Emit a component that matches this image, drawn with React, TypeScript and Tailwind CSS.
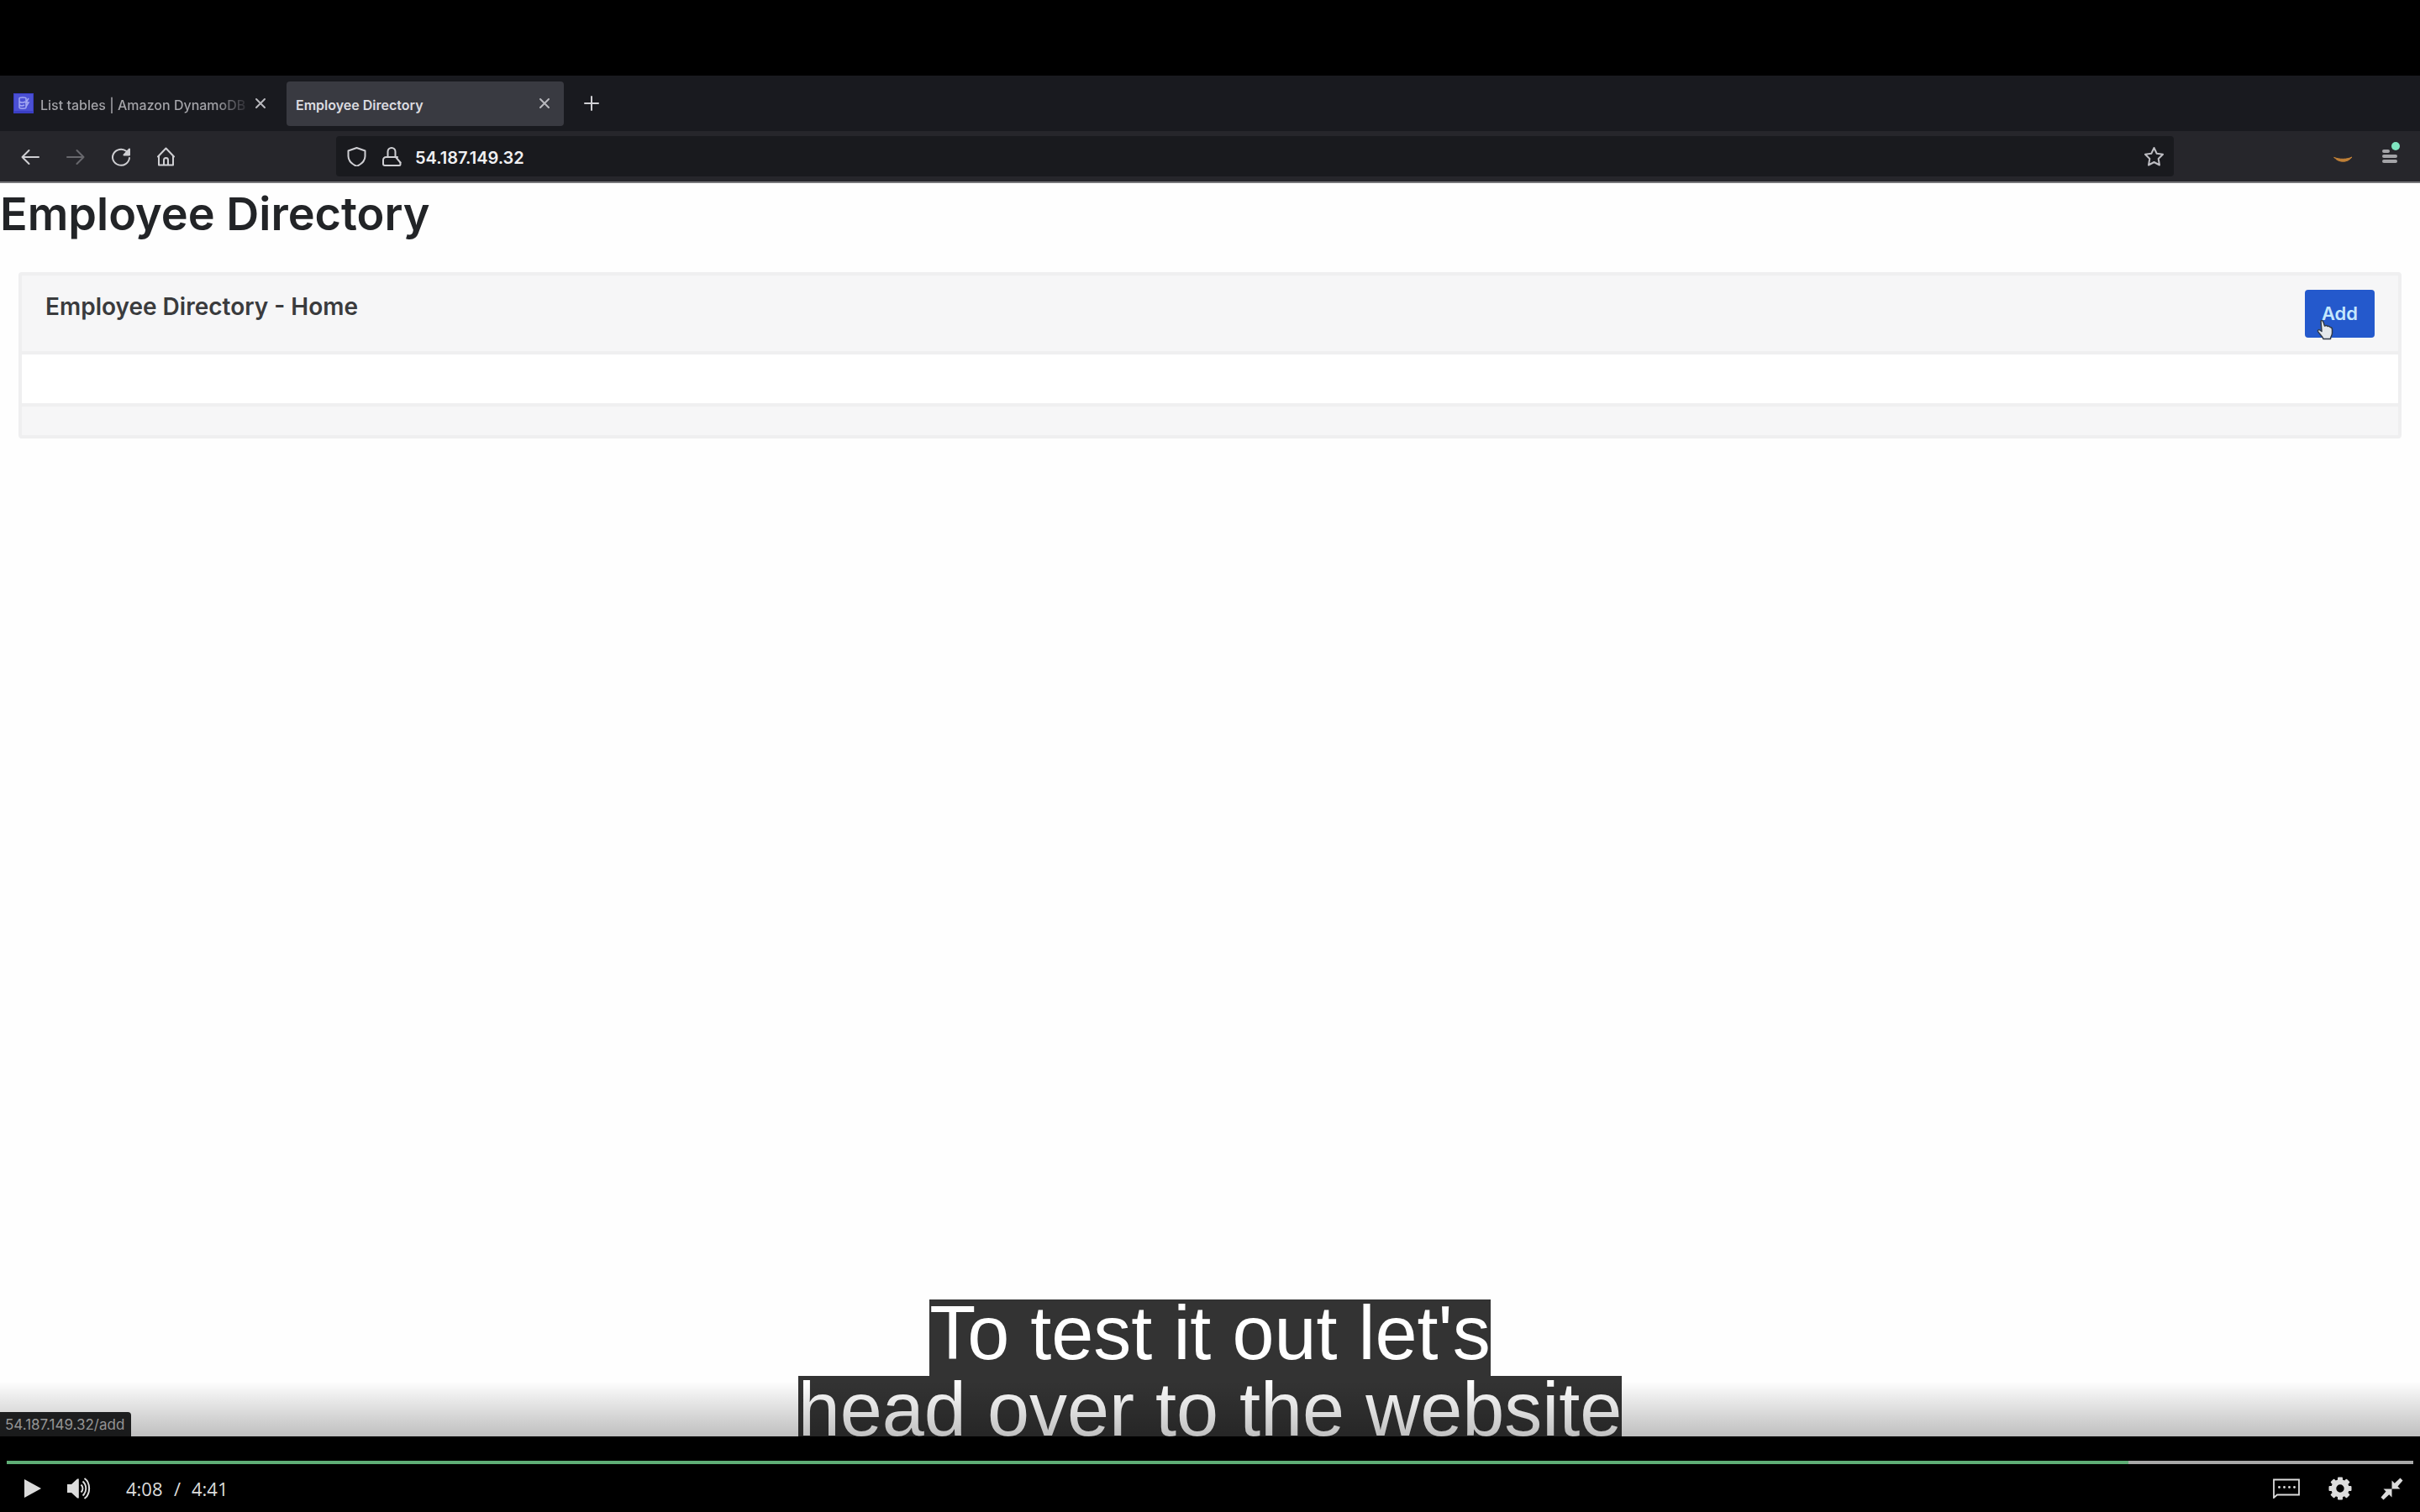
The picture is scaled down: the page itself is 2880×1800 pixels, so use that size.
import React from "react";

const INTER = "font-['Inter',sans-serif]";

type IconProps = { children: React.ReactNode; className?: string; width?: number };

function LineIcon({ children, className = "", width = 2 }: IconProps) {
  return (
    <svg
      viewBox="0 0 24 24"
      className={`block size-6 shrink-0 ${className}`}
      fill="none"
      stroke="currentColor"
      strokeWidth={width}
      strokeLinecap="round"
      strokeLinejoin="round"
      aria-hidden="true"
    >
      {children}
    </svg>
  );
}

function CloseIcon() {
  return (
    <LineIcon>
      <path d="M7 7l10 10M17 7L7 17" />
    </LineIcon>
  );
}

function TabStrip() {
  return (
    <div role="tablist" className="flex h-[66px] items-center bg-[#191a1f] text-[#b9b9be]">
      <div className="flex h-[53px] w-[341px] items-center pl-4 pr-[19px]">
        <svg viewBox="0 0 24 24" className="mr-2 size-6 shrink-0" aria-hidden="true">
          <rect width="24" height="24" fill="#3a3ec4" />
          <rect x="1" y="1" width="22" height="20" fill="#4b50d4" />
          <path
            d="M7 6c0-1.500 8-1.500 8 0v11c0 1.500-8 1.500-8 0zM7 10c2 1.200 5 1.200 7 0M7 14c2 1.200 4 1.200 6 0M18 6l-3 5h3l-3 5"
            fill="none"
            stroke="#a3a8f2"
            strokeWidth="1.500"
          />
        </svg>
        <button
          role="tab"
          aria-selected="false"
          className="min-w-0 flex-1 whitespace-nowrap bg-linear-to-r from-[#a6a6ab] from-85% to-[#2a2a30] bg-clip-text pt-[3px] text-left text-[16px] font-medium text-transparent"
        >
          List tables | Amazon DynamoDB
        </button>
        <button aria-label="Close tab" className="ml-1">
          <CloseIcon />
        </button>
      </div>
      <div className="flex h-[53px] w-[330px] items-center justify-between rounded-sm bg-[#393a41] pl-[11px] pr-[11px]">
        <button role="tab" aria-selected="true" className="pt-[3px] text-[16px] font-semibold text-[#dcdce0]">
          Employee Directory
        </button>
        <button aria-label="Close tab">
          <CloseIcon />
        </button>
      </div>
      <button aria-label="New tab" className="ml-[21px] text-[#d0d0d4]">
        <LineIcon>
          <path d="M12 4v16M4 12h16" />
        </LineIcon>
      </button>
    </div>
  );
}

function Toolbar() {
  return (
    <div className="flex h-[62px] items-center border-b-2 border-[#77777a] bg-[#26262b] text-[#cfcfd3]">
      <div className="flex w-[400px] items-center gap-[30px] pl-6">
        <button aria-label="Back">
          <LineIcon>
            <path d="M22 13H2.500M10.500 5L2.500 13l8 8" />
          </LineIcon>
        </button>
        <button aria-label="Forward" className="text-[#68686d]">
          <LineIcon>
            <path d="M2 13h19.500M13.500 5l8 8-8 8" />
          </LineIcon>
        </button>
        <button aria-label="Reload">
          <LineIcon>
            <path d="M22 14A10 9.500 0 1 1 18.500 6" />
            <path d="M22 3.500v7h-6.500z" fill="currentColor" />
          </LineIcon>
        </button>
        <button aria-label="Home">
          <LineIcon>
            <path d="M2 12.500L11.500 2.500 21 12.500M3 11.500V22.500h17V11.500" />
            <path d="M9 22V16.500a2.500 2.500 0 0 1 5 0V22" />
          </LineIcon>
        </button>
      </div>
      <div className="flex h-12 min-w-0 flex-1 items-center rounded bg-[#191a1e] pl-3 pr-3">
        <LineIcon>
          <path d="M12.500 2L22.500 5.500V12c0 5.500-3.500 9-10 12C6 21 2.500 17.500 2.500 12V5.500z" />
        </LineIcon>
        <LineIcon className="ml-[18px]">
          <path d="M4 23h17a1.500 1.500 0 0 0 1.500-1.500v-2M19 13H5.500A3.500 3.500 0 0 0 2 16.500V21c0 1 1 2 2 2" />
          <path d="M7.500 13V6.500a4.500 4.500 0 0 1 9 0V13M17 13l5.500 6.500" />
        </LineIcon>
        <input
          aria-label="Address"
          defaultValue="54.187.149.32"
          className="ml-4 min-w-0 flex-1 bg-transparent pt-[3px] text-[20px] font-semibold text-[#f0f0f2] outline-none"
        />
        <button aria-label="Bookmark this page" className="text-[#bdbdc2]">
          <LineIcon>
            <path d="M12.500 2l3.200 6.800 7.300 1-5.300 5.200 1.300 7.500-6.500-3.500L6 22.500 7.300 15 2 9.800l7.300-1z" />
          </LineIcon>
        </button>
      </div>
      <div className="flex w-[293px] items-center justify-end gap-8 pr-6">
        <button aria-label="Extension" className="text-[#c08037]">
          <LineIcon>
            <path d="M2 13.500c6 2.500 15 2.500 21-.5-5 7-16 7-21 .5z" fill="currentColor" strokeWidth="1" />
          </LineIcon>
        </button>
        <button aria-label="Open menu" className="relative text-[#a4a4a8]">
          <LineIcon width={4}>
            <path d="M5 6h5M5 12h14M5 18h14" />
          </LineIcon>
          <span className="absolute right-0 top-[-5px] size-[10px] rounded-full bg-[#7fe5c0]" />
        </button>
      </div>
    </div>
  );
}

function HandCursor() {
  return (
    <svg viewBox="0 0 20 26" className="absolute bottom-[-3px] left-[14px] h-[26px] w-5" aria-hidden="true">
      <path
        d="M5 3c1.500-1 2.500 0 3 1.500l1.500 4.500c2-1 3-.5 3.500.500 1.500-.5 2.500 0 3 1 2 0 2.500 1.500 2.500 3v4c0 3-2 4-2 7H8c-1-3-5-6-6.500-9-.5-1.500 1-2.500 2.500-1.500l2 1.500z"
        fill="#e4e8ec"
        stroke="#303a48"
        strokeWidth="1.500"
        strokeLinejoin="round"
      />
    </svg>
  );
}

function DirectoryPage() {
  return (
    <main className="flex-1 bg-[#fefefe]">
      <h1 className="text-[54px] font-semibold leading-[74px] text-[#222427]">Employee Directory</h1>
      <section className="mx-[22px] mt-8 overflow-hidden rounded border-4 border-[#efeff0] bg-white">
        <header className="flex items-start justify-between border-b-4 border-[#efeff0] bg-[#f6f6f7] px-7 pb-4 pt-[17px]">
          <h2 className="text-[28px] font-semibold leading-10 text-[#3a3b3d]">Employee Directory - Home</h2>
          <a
            href="#add"
            className="relative flex h-[57px] w-[83px] items-center justify-center rounded bg-[#2459cc] text-[22px] font-semibold text-[#c4e8fd]"
          >
            Add
            <HandCursor />
          </a>
        </header>
        <div className="h-[58px]" />
        <footer className="h-[38px] border-t-4 border-[#efeff0] bg-[#f6f6f7]" />
      </section>
    </main>
  );
}

function Captions() {
  return (
    <p className="absolute inset-x-0 bottom-0 text-center font-['Liberation_Sans',sans-serif] text-[90px] leading-[81px] text-white">
      <span className="mx-auto block h-[91px] w-fit bg-[#333333]">To test it out let's</span>
      <span className="mx-auto block h-[72px] w-fit bg-[#333333]">head over to the website</span>
    </p>
  );
}

function PlayerControls() {
  return (
    <div className="relative h-[90px] bg-black pt-[29px] font-['Open_Sans','Noto_Sans',sans-serif] text-[#dcdcdc]">
      <div
        role="progressbar"
        aria-label="Playback position"
        aria-valuenow={248}
        aria-valuemin={0}
        aria-valuemax={281}
        className="mx-2 h-1 bg-[#a8a8a8]"
      >
        <div className="h-full bg-[#5fae76]" style={{ width: `${(247.7 / 281) * 100}%` }} />
      </div>
      <div className="flex h-[58px] items-center pl-[29px] pr-5">
        <button aria-label="Play">
          <svg viewBox="0 0 20 22" className="h-[22px] w-5" fill="currentColor" aria-hidden="true">
            <path d="M0 0l20 11L0 22z" />
          </svg>
        </button>
        <button aria-label="Mute" className="ml-[31px]">
          <svg viewBox="0 0 30 26" className="h-[26px] w-[30px]" fill="currentColor" aria-hidden="true">
            <path d="M0 8h5l7-6.500h1.800v23H12L5 18H0z" />
            <g fill="none" stroke="currentColor" strokeWidth="2">
              <path d="M16.500 8.500c2.600 2.400 2.600 6.600 0 9" />
              <path d="M18.500 4.500c5 4.500 5 12.500 0 17" />
              <path d="M20.500 1c7.500 5 7.500 19 0 24" />
            </g>
          </svg>
        </button>
        <div className="ml-10 flex text-[22px] leading-7">
          <span className="w-[57px]">4:08</span>
          <span className="w-[21px]">/</span>
          <span>4:41</span>
        </div>
        <div className="ml-auto flex items-center gap-[34px]">
          <button aria-label="Captions">
            <svg viewBox="0 0 32 24" className="h-6 w-8" aria-hidden="true">
              <path d="M1 1.500h30v18H5L1 23z" fill="none" stroke="currentColor" strokeWidth="1.800" />
              <g fill="currentColor">
                <circle cx="7.500" cy="10.500" r="1.400" />
                <circle cx="13.500" cy="10.500" r="1.400" />
                <circle cx="19.500" cy="10.500" r="1.400" />
                <circle cx="25.500" cy="10.500" r="1.400" />
              </g>
            </svg>
          </button>
          <button aria-label="Settings">
            <svg viewBox="0 0 28 28" className="size-7" aria-hidden="true">
              <circle cx="14" cy="14" r="7.700" fill="none" stroke="currentColor" strokeWidth="6" />
              <g fill="currentColor">
                <rect x="11" y="0.500" width="6" height="5" rx="1" />
                <rect x="11" y="22.500" width="6" height="5" rx="1" />
                <rect x="0.500" y="11" width="5" height="6" rx="1" />
                <rect x="22.500" y="11" width="5" height="6" rx="1" />
                <g transform="rotate(45 14 14)">
                  <rect x="11" y="0.500" width="6" height="5" rx="1" />
                  <rect x="11" y="22.500" width="6" height="5" rx="1" />
                  <rect x="0.500" y="11" width="5" height="6" rx="1" />
                  <rect x="22.500" y="11" width="5" height="6" rx="1" />
                </g>
              </g>
            </svg>
          </button>
          <button aria-label="Exit full screen">
            <svg viewBox="0 0 27 27" className="size-[27px]" aria-hidden="true">
              <path
                d="M13.500 3.500V13.500H23.500L20.500 10.500L26.500 3.500L23.500 .5L16.800 6.800zM13.500 23.500V13.500H3.500L6.500 16.500L.5 23.500L3.500 26.500L10.200 20.200z"
                fill="currentColor"
              />
            </svg>
          </button>
        </div>
      </div>
    </div>
  );
}

export default function App() {
  return (
    <div className="flex h-screen flex-col bg-black pt-[90px]">
      <div className={`relative flex min-h-0 flex-1 flex-col ${INTER}`}>
        <TabStrip />
        <Toolbar />
        <DirectoryPage />
        <div className="absolute bottom-0 left-0 h-[29px] rounded-tr bg-[#222324] pl-[6px] pr-2 pt-px text-[17px] leading-7 text-[#b8b8b8]">
          54.187.149.32/add
        </div>
        <Captions />
        <div className="pointer-events-none absolute inset-x-0 bottom-0 h-[66px] bg-linear-to-b from-black/0 to-black/25" />
      </div>
      <PlayerControls />
    </div>
  );
}
